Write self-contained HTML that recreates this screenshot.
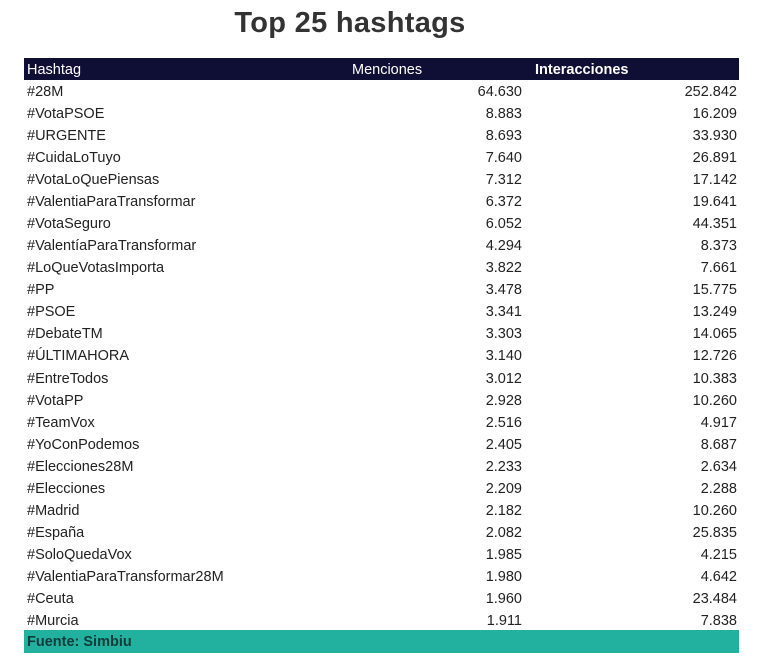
<!DOCTYPE html>
<html><head><style>
body{margin:0;width:768px;height:668px;background:#fff;font-family:"Liberation Sans",sans-serif;color:#222;position:relative;overflow:hidden}
h1{position:absolute;top:7px;left:0;width:700px;text-align:center;margin:0;font-size:29px;font-weight:bold;color:#333;letter-spacing:0.3px}
.hdr{position:absolute;left:24px;top:58px;width:715px;height:22px;background:#0f0f35;color:#fff;font-size:14.5px}
.hdr span{position:absolute;top:4px}
.row{position:absolute;left:24px;width:715px;height:22px;font-size:14.5px}
.row span{position:absolute;top:3px}
.a{left:3px}.b{right:217px}.c{right:2px}
.ft{position:absolute;left:24px;top:630px;width:715px;height:23px;background:#22b09f;color:#0f3c3a;font-weight:bold;font-size:14.5px}
.ft span{position:absolute;left:3px;top:4px}
</style></head><body>
<h1>Top 25 hashtags</h1>
<div class="hdr"><span style="left:3px">Hashtag</span><span style="left:328px">Menciones</span><span style="left:511px;font-weight:bold">Interacciones</span></div>
<div class="row" style="top:81px"><span class="a">#28M</span><span class="b">64.630</span><span class="c">252.842</span></div>
<div class="row" style="top:103px"><span class="a">#VotaPSOE</span><span class="b">8.883</span><span class="c">16.209</span></div>
<div class="row" style="top:125px"><span class="a">#URGENTE</span><span class="b">8.693</span><span class="c">33.930</span></div>
<div class="row" style="top:147px"><span class="a">#CuidaLoTuyo</span><span class="b">7.640</span><span class="c">26.891</span></div>
<div class="row" style="top:169px"><span class="a">#VotaLoQuePiensas</span><span class="b">7.312</span><span class="c">17.142</span></div>
<div class="row" style="top:191px"><span class="a">#ValentiaParaTransformar</span><span class="b">6.372</span><span class="c">19.641</span></div>
<div class="row" style="top:213px"><span class="a">#VotaSeguro</span><span class="b">6.052</span><span class="c">44.351</span></div>
<div class="row" style="top:235px"><span class="a">#ValentíaParaTransformar</span><span class="b">4.294</span><span class="c">8.373</span></div>
<div class="row" style="top:257px"><span class="a">#LoQueVotasImporta</span><span class="b">3.822</span><span class="c">7.661</span></div>
<div class="row" style="top:279px"><span class="a">#PP</span><span class="b">3.478</span><span class="c">15.775</span></div>
<div class="row" style="top:301px"><span class="a">#PSOE</span><span class="b">3.341</span><span class="c">13.249</span></div>
<div class="row" style="top:323px"><span class="a">#DebateTM</span><span class="b">3.303</span><span class="c">14.065</span></div>
<div class="row" style="top:345px"><span class="a">#ÚLTIMAHORA</span><span class="b">3.140</span><span class="c">12.726</span></div>
<div class="row" style="top:368px"><span class="a">#EntreTodos</span><span class="b">3.012</span><span class="c">10.383</span></div>
<div class="row" style="top:390px"><span class="a">#VotaPP</span><span class="b">2.928</span><span class="c">10.260</span></div>
<div class="row" style="top:412px"><span class="a">#TeamVox</span><span class="b">2.516</span><span class="c">4.917</span></div>
<div class="row" style="top:434px"><span class="a">#YoConPodemos</span><span class="b">2.405</span><span class="c">8.687</span></div>
<div class="row" style="top:456px"><span class="a">#Elecciones28M</span><span class="b">2.233</span><span class="c">2.634</span></div>
<div class="row" style="top:478px"><span class="a">#Elecciones</span><span class="b">2.209</span><span class="c">2.288</span></div>
<div class="row" style="top:500px"><span class="a">#Madrid</span><span class="b">2.182</span><span class="c">10.260</span></div>
<div class="row" style="top:522px"><span class="a">#España</span><span class="b">2.082</span><span class="c">25.835</span></div>
<div class="row" style="top:544px"><span class="a">#SoloQuedaVox</span><span class="b">1.985</span><span class="c">4.215</span></div>
<div class="row" style="top:566px"><span class="a">#ValentiaParaTransformar28M</span><span class="b">1.980</span><span class="c">4.642</span></div>
<div class="row" style="top:588px"><span class="a">#Ceuta</span><span class="b">1.960</span><span class="c">23.484</span></div>
<div class="row" style="top:610px"><span class="a">#Murcia</span><span class="b">1.911</span><span class="c">7.838</span></div>
<div class="ft"><span>Fuente: Simbiu</span></div>
</body></html>
